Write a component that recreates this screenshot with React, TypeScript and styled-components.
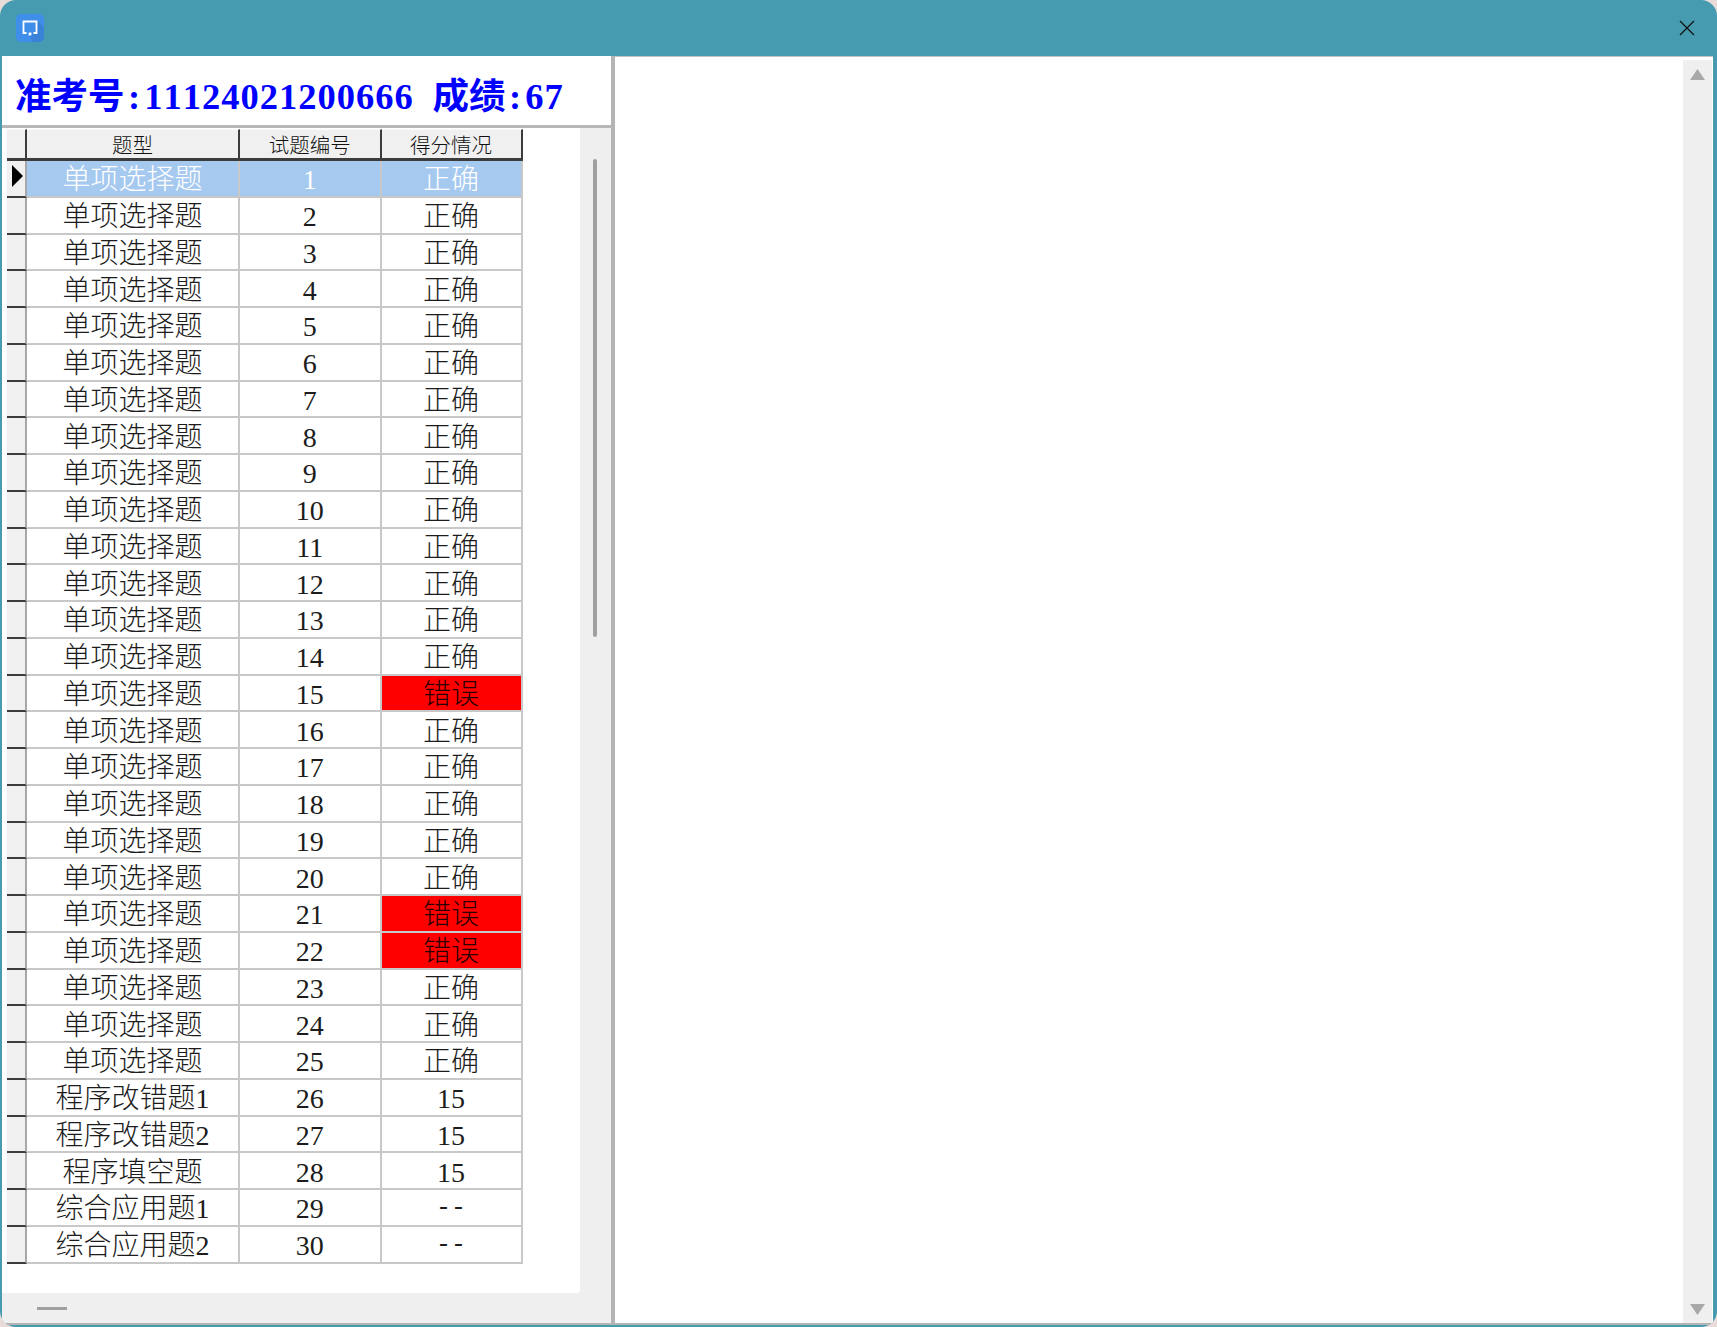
import React from "react";
import styled, { createGlobalStyle } from "styled-components";

const Global = createGlobalStyle`
  html, body { margin: 0; padding: 0; background: #e9dcd8; }
  * { box-sizing: border-box; }
`;

const FONT = `"Liberation Serif", "Noto Sans CJK SC", serif`;
const CJK = `"Noto Sans CJK SC", "Liberation Serif", sans-serif`;
const COLS = "20px 213px 141.5px 141px";
const ROW_H = 36.76;

const Window = styled.div`
  width: 1717px;
  height: 1327px;
  display: flex;
  flex-direction: column;
  background: #479bb0;
  border-radius: 16px;
  overflow: hidden;
  padding: 0 4px 2px 2px;
`;
const TitleBar = styled.div`
  height: 56px;
  flex: none;
  display: flex;
  align-items: center;
  justify-content: space-between;
  padding: 0 18px 0 14px;
`;
const AppIcon = styled.svg`
  width: 28px;
  height: 28px;
  display: block;
`;
const CloseIcon = styled.svg`
  width: 16px;
  height: 16px;
  display: block;
`;
const Body = styled.div`
  flex: 1;
  min-height: 0;
  display: flex;
  background: #b4b4b4;
  padding-bottom: 2px;
`;
const LeftPane = styled.div`
  width: 609px;
  flex: none;
  display: flex;
  flex-direction: column;
  background: #fff;
`;
const ScoreBand = styled.div`
  height: 72px;
  flex: none;
  padding: 19px 0 0 13px;
  border-bottom: 3px solid #b8b8b8;
  font: bold 36.5px/44px ${FONT};
  color: #0000ff;
  white-space: pre;
`;
const HalfChar = styled.span`
  display: inline-block;
  width: 19.25px;
  text-align: center;
`;
const GridArea = styled.div`
  flex: 1;
  min-height: 0;
  display: grid;
  grid-template-columns: 1fr 31px;
  grid-template-rows: 1fr 30px;
  background: #efefef;
`;
const DataArea = styled.div`
  background: #fff;
  border-left: 5px solid #fff;
  border-bottom-right-radius: 3px;
  padding-top: 1px;
  overflow: hidden;
`;
const GridRow = styled.div`
  display: grid;
  grid-template-columns: ${COLS};
`;
const HeaderCell = styled.div`
  height: 32px;
  background: #f0f0f0;
  border-top: 1px solid #fafafa;
  border-right: 2px solid #3c3c3c;
  border-bottom: 3px solid #3c3c3c;
  display: flex;
  align-items: center;
  justify-content: center;
  font: 300 20.5px/28px ${CJK};
  color: #111;
`;
const RowHead = styled.div`
  height: ${ROW_H}px;
  background: #f0f0f0;
  border-right: 2px solid #a8a8a8;
  border-bottom: 2px solid #3c3c3c;
  display: flex;
  align-items: center;
  justify-content: center;
`;
const Pointer = styled.svg`
  width: 11px;
  height: 22px;
  display: block;
  margin: 0 0 4px 2px;
`;
const Cell = styled.div<{ $sel?: boolean; $bad?: boolean }>`
  height: ${ROW_H}px;
  background: ${(p) => (p.$bad ? "#ff0000" : p.$sel ? "#a6c9ef" : "#fff")};
  color: ${(p) => (p.$sel ? "#fff" : p.$bad ? "#2a0000" : "#1c1c1c")};
  border-right: 2px solid #c8c8c8;
  border-bottom: 2px solid #c8c8c8;
  display: flex;
  align-items: center;
  justify-content: center;
  padding-top: 4px;
  font: 300 28px/32px ${FONT};
  white-space: pre;
`;
const Dash = styled.span`
  font: 25px/32px "Liberation Mono", monospace;
`;
const VScroll = styled.div`
  position: relative;
`;
const VThumb = styled.div`
  width: 4px;
  height: 478px;
  margin: 31px 0 0 13px;
  background: #a0a0a0;
  border-radius: 2px;
`;
const HScroll = styled.div`
  padding: 14px 0 0 35px;
`;
const HThumb = styled.div`
  width: 30px;
  height: 3px;
  background: #a0a0a0;
`;
const Divider = styled.div`
  width: 4px;
  flex: none;
  background: #b4b4b4;
`;
const RightPane = styled.div`
  flex: 1;
  display: flex;
  justify-content: flex-end;
  background: #fff;
  border-top: 1px solid #c4c4c4;
  padding: 3px 1px 0 0;
`;
const PageScroll = styled.div`
  width: 29px;
  background: #efefef;
  display: flex;
  flex-direction: column;
  justify-content: space-between;
  align-items: center;
  padding: 9px 0 8px;
`;
const Arrow = styled.svg`
  width: 15px;
  height: 11px;
  display: block;
`;

type Row = [string, string];
const rows: Row[] = [];
for (let i = 1; i <= 25; i++) {
  rows.push(["单项选择题", [15, 21, 22].includes(i) ? "错误" : "正确"]);
}
rows.push(["程序改错题1", "15"], ["程序改错题2", "15"], ["程序填空题", "15"], ["综合应用题1", "--"], ["综合应用题2", "--"]);

const scoreLine = "准考号:11124021200666 成绩:67";

export default function App() {
  return (
    <>
      <Global />
      <Window>
        <TitleBar>
          <AppIcon viewBox="0 0 28 28">
            <rect width="28" height="28" rx="5" fill="#3f8fea" />
            <path d="M14 22 L22 14 V7 L28 13 V23 a5 5 0 0 1-5 5 H16 Z" fill="#3478c8" opacity="0.55" />
            <path d="M10.5 19 H7.5 V7.5 H20.5 V19 H17.5" fill="none" stroke="#fff" strokeWidth="1.8" />
            <rect x="12.6" y="18.6" width="2.8" height="2.8" fill="#fff" />
          </AppIcon>
          <CloseIcon viewBox="0 0 16 16">
            <path d="M1 1 L15 15 M15 1 L1 15" stroke="#111" strokeWidth="1.3" fill="none" />
          </CloseIcon>
        </TitleBar>
        <Body>
          <LeftPane>
            <ScoreBand>
              {Array.from(scoreLine).map((ch, i) =>
                ch.charCodeAt(0) < 128 ? <HalfChar key={i}>{ch}</HalfChar> : ch
              )}
            </ScoreBand>
            <GridArea>
              <DataArea>
                <GridRow>
                  <HeaderCell />
                  <HeaderCell>题型</HeaderCell>
                  <HeaderCell>试题编号</HeaderCell>
                  <HeaderCell>得分情况</HeaderCell>
                </GridRow>
                {rows.map(([kind, score], i) => (
                  <GridRow key={i}>
                    <RowHead>
                      {i === 0 && (
                        <Pointer viewBox="0 0 11 22">
                          <path d="M0 0 L11 11 L0 22 Z" fill="#000" />
                        </Pointer>
                      )}
                    </RowHead>
                    <Cell $sel={i === 0}>{kind}</Cell>
                    <Cell $sel={i === 0}>{i + 1}</Cell>
                    <Cell $sel={i === 0} $bad={score === "错误"}>
                      {score === "--" ? <Dash>{score}</Dash> : score}
                    </Cell>
                  </GridRow>
                ))}
              </DataArea>
              <VScroll>
                <VThumb />
              </VScroll>
              <HScroll>
                <HThumb />
              </HScroll>
            </GridArea>
          </LeftPane>
          <Divider />
          <RightPane>
            <PageScroll>
              <Arrow viewBox="0 0 15 11">
                <path d="M7.5 0 L15 11 H0 Z" fill="#a8a8a8" />
              </Arrow>
              <Arrow viewBox="0 0 15 11">
                <path d="M0 0 H15 L7.5 11 Z" fill="#a8a8a8" />
              </Arrow>
            </PageScroll>
          </RightPane>
        </Body>
      </Window>
    </>
  );
}
